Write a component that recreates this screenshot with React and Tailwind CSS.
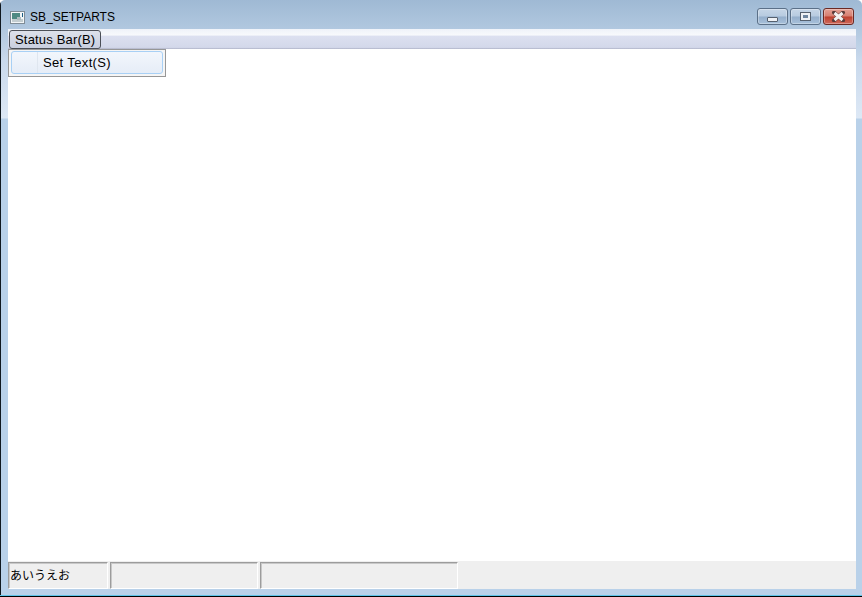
import React from 'react';

const font = { fontFamily: '"Liberation Sans", "Noto Sans CJK JP", Arial, sans-serif' };

function WinIcon() {
  return (
    <svg width="15" height="13" viewBox="0 0 15 13" className="shrink-0">
      <rect x="0.5" y="0.5" width="14" height="12" fill="#f2f5f7" stroke="#7f8c96" />
      <rect x="2" y="2" width="8" height="9" fill="#4f8a83" />
      <rect x="2" y="8" width="11" height="3" fill="#c3cdd0" />
      <rect x="7" y="6" width="4" height="3" fill="#aebcbf" />
      <rect x="12" y="2" width="1" height="4" fill="#1d5f86" />
    </svg>
  );
}

function CaptionButton({ children, className }) {
  return (
    <div className={`w-[31px] h-[17px] flex items-center justify-center rounded-[3px] border shadow-[inset_0_0_0_1px_rgba(255,255,255,0.3)] ${className}`}>
      {children}
    </div>
  );
}

function StatusPart({ className, children }) {
  return (
    <div className={`h-full border-t border-l border-[#9c9c9c] border-r border-r-white border-b border-b-white shadow-[inset_1px_1px_0_#c8c8c8] pl-px text-[12px] leading-[27px] text-black truncate ${className}`}>
      {children}
    </div>
  );
}

export default function App() {
  return (
    <div className="relative w-[862px] h-[597px] overflow-hidden rounded-t-[5px] bg-[linear-gradient(180deg,#9fb9d4_0px,#b0c7df_28px,#c9d9ec_60px,#dde8f5_118px,#b9d1e9_119px,#b9d1e9_100%)]" style={font}>
      <div className="absolute left-0 top-0 bottom-0 w-px bg-[#10181f]" />
      <div className="absolute left-0 right-0 bottom-0 h-px bg-black" />
      <div className="absolute left-0 right-0 bottom-px h-px bg-[#5ec4e8]" />

      <div className="h-[597px] flex flex-col pl-2 pr-[6px] pb-2">
        {/* Title bar */}
        <div className="h-[29px] flex items-center -ml-2 -mr-[6px] pl-[10px] pr-2 pt-[5px] shrink-0">
          <WinIcon />
          <span className="ml-[5px] text-[12px] text-black">SB_SETPARTS</span>
          <div className="ml-auto flex gap-[2px] mb-[1px]">
            <CaptionButton className="border-[#5b7088] bg-[linear-gradient(180deg,#c6d6e7_0%,#b7cbe0_48%,#94aecb_52%,#a8c1db_100%)]">
              <div className="w-[11px] h-[5px] mt-[5px] rounded-[1px] bg-[#eef1f5] border border-[#55606e]" />
            </CaptionButton>
            <CaptionButton className="border-[#5b7088] bg-[linear-gradient(180deg,#c6d6e7_0%,#b7cbe0_48%,#94aecb_52%,#a8c1db_100%)]">
              <div className="w-[9px] h-[7px] border-2 border-[#eef1f5] outline outline-1 outline-[#55606e] bg-[#6f86a0]" />
            </CaptionButton>
            <CaptionButton className="border-[#6b2a24] bg-[linear-gradient(180deg,#e3a195_0%,#d77e70_48%,#bd3f2d_52%,#cf6a5c_100%)]">
              <svg width="15" height="11" viewBox="0 0 15 11">
                <path d="M3 1.5 L12 9.5 M12 1.5 L3 9.5" stroke="#5a3a38" strokeWidth="4" strokeLinecap="round" />
                <path d="M3.5 2 L11.5 9 M11.5 2 L3.5 9" stroke="#f4f0ef" strokeWidth="3" />
              </svg>
            </CaptionButton>
          </div>
        </div>

        {/* Menu bar */}
        <div className="h-[20px] shrink-0 flex items-start bg-[linear-gradient(180deg,#eef2f9_0%,#f7f9fc_30%,#dce0f0_36%,#d3d8ea_92%,#aeb2c6_100%)]">
          <div className="ml-px h-[19px] mt-px px-[5px] flex items-center rounded-[3px] border border-[#4b4f57] bg-[linear-gradient(180deg,#dde1ea_0%,#c9cfdf_100%)] text-[13px] tracking-[0.18px] text-black">
            Status Bar(B)
          </div>
        </div>

        {/* Client area */}
        <div className="flex-1 bg-white" />

        {/* Status bar */}
        <div className="h-[28px] shrink-0 bg-[#efefef] pt-px flex gap-[2px] items-stretch">
          <StatusPart className="w-[100px]">あいうえお</StatusPart>
          <StatusPart className="w-[148px]" />
          <StatusPart className="w-[198px]" />
        </div>
      </div>

      {/* Popup menu */}
      <div className="absolute left-2 top-[49px] w-[158px] h-[28px] border border-[#979797] bg-[#f5f5f5] pt-px px-[2px] pb-[2px] text-[13px] text-black">
        <div className="h-full flex items-center rounded-[3px] border border-[#a8d0f5] bg-[linear-gradient(180deg,#f2f6fc_0%,#e6edf7_100%)]">
          <div className="w-[26px] h-full border-r border-[#dfe6ef]" />
          <span className="ml-[5px] tracking-[0.36px]">Set Text(S)</span>
        </div>
      </div>
    </div>
  );
}
